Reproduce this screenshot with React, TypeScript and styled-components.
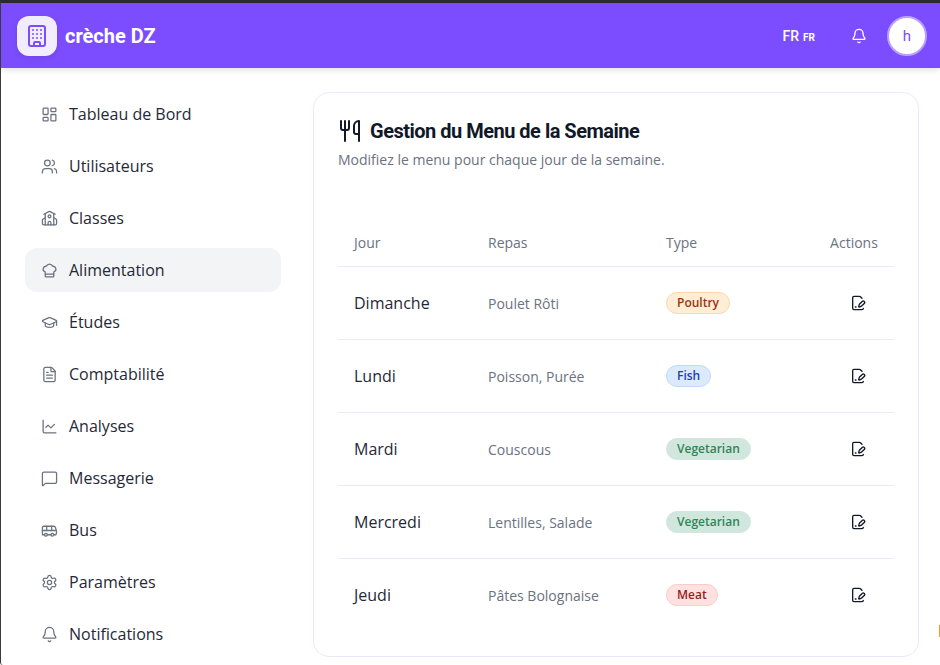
import React from "react";
import styled, { createGlobalStyle } from "styled-components";
import {
  Bell,
  Building,
  Bus,
  ChartLine,
  ChefHat,
  FileText,
  GraduationCap,
  LayoutDashboard,
  MessageSquare,
  School,
  Settings,
  Users,
  Utensils,
} from "lucide-react";

const GlobalStyle = createGlobalStyle`
  html, body {
    margin: 0;
    padding: 0;
    height: 100%;
    overflow: hidden;
    background: #fff;
  }
  body {
    font-family: "Open Sans", "Noto Sans", sans-serif;
  }
`;

const Frame = styled.div`
  width: 940px;
  height: 665px;
  display: flex;
  flex-direction: column;
  box-sizing: border-box;
  border-top: 3px solid #2b2b2b;
  border-left: 1px solid #3a3a3a;
  border-bottom-left-radius: 3px;
  overflow: hidden;
  position: relative;
`;

// the sliver of something orange that peeks in at the window edge
const EdgeSliver = styled.div`
  position: absolute;
  right: 0;
  top: 622px;
  width: 1px;
  height: 12px;
  background: #e3a42c;
`;

const Header = styled.header`
  height: 65px;
  flex: none;
  background: #7c4dff;
  box-shadow: 0 2px 6px rgba(0, 0, 0, 0.12);
  display: flex;
  align-items: center;
  padding: 0 13px 0 16px;
  position: relative;
  z-index: 1;
`;

const LogoBox = styled.div`
  width: 40px;
  height: 40px;
  border-radius: 12px;
  background: #f1edff;
  color: #7c4dff;
  box-shadow: 0 2px 6px rgba(0, 0, 0, 0.1);
  display: flex;
  align-items: center;
  justify-content: center;
  margin-right: 8px;
`;

const Brand = styled.div`
  font-family: Roboto, sans-serif;
  font-weight: 700;
  font-size: 20px;
  color: #fff;
`;

const HeaderRight = styled.div`
  margin-left: auto;
  display: flex;
  align-items: center;
  color: #fff;
`;

const Lang = styled.div`
  font-family: Roboto, sans-serif;
  font-size: 14px;
  font-weight: 500;
  display: flex;
  align-items: baseline;
  gap: 4px;
  margin-right: 36px;
`;

const LangCode = styled.span`
  font-size: 10px;
  font-weight: 700;
`;

const Avatar = styled.div`
  width: 36px;
  height: 36px;
  margin-left: 20px;
  border-radius: 50%;
  background: #fff;
  border: 2px solid #b9a0ff;
  color: #7c4dff;
  font-family: Roboto, sans-serif;
  font-size: 15px;
  display: flex;
  align-items: center;
  justify-content: center;
`;

const Body = styled.div`
  flex: 1;
  min-height: 0;
  display: flex;
`;

const Sidebar = styled.nav`
  width: 280px;
  flex: none;
  box-sizing: border-box;
  padding: 24px 0 0 24px;
  display: flex;
  flex-direction: column;
  gap: 8px;
`;

const NavItem = styled.div<{ $active?: boolean }>`
  height: 44px;
  flex: none;
  box-sizing: border-box;
  padding: 0 16px;
  border-radius: 12px;
  display: flex;
  align-items: center;
  gap: 11px;
  font-size: 16px;
  color: #1f2937;
  background: ${(p) => (p.$active ? "#f3f4f6" : "transparent")};
  svg {
    color: #6b7280;
    flex: none;
  }
`;

const Main = styled.main`
  flex: 1;
  min-width: 0;
  padding: 24px 21px 0 32px;
`;

const Card = styled.section`
  box-sizing: border-box;
  height: 565px;
  border: 1px solid #ebe9fb;
  border-radius: 16px;
  background: #fff;
  padding: 26px 24px 0;
`;

const TitleRow = styled.div`
  display: flex;
  align-items: center;
  gap: 8px;
  color: #111827;
`;

const Title = styled.h2`
  margin: 0;
  font-family: Roboto, sans-serif;
  font-weight: 700;
  font-size: 20px;
  letter-spacing: -0.5px;
`;

const Subtitle = styled.p`
  margin: 7px 0 0;
  font-size: 14px;
  color: #6b7280;
`;

const MenuTable = styled.div`
  margin-top: 49px;
`;

const grid = `
  display: grid;
  grid-template-columns: 134px 178px 1fr 92px;
  align-items: center;
`;

const HeadRow = styled.div`
  ${grid}
  height: 49px;
  box-sizing: border-box;
  font-size: 14px;
  color: #6b7280;
  border-bottom: 1px solid #ebe9fb;
`;

const Row = styled.div`
  ${grid}
  height: 73px;
  box-sizing: border-box;
  border-bottom: 1px solid #ebe9fb;
  &:last-child {
    border-bottom-color: transparent;
  }
`;

const Cell = styled.div`
  padding-left: 16px;
`;

const ActionsHead = styled.div`
  text-align: center;
  padding-left: 12px;
`;

const Day = styled(Cell)`
  font-size: 16px;
  color: #1f2937;
`;

const Meal = styled(Cell)`
  font-size: 14px;
  color: #6b7280;
`;

const TypeCell = styled(Cell)`
  display: flex;
`;

const tones = {
  Poultry: { bg: "#ffedd5", border: "#fed7aa", fg: "#9a3412" },
  Fish: { bg: "#dbeafe", border: "#bfdbfe", fg: "#1e40af" },
  Vegetarian: { bg: "#d1e7dd", border: "#d1e7dd", fg: "#2e8555" },
  Meat: { bg: "#fee2e2", border: "#fecaca", fg: "#991b1b" },
};

type MealType = keyof typeof tones;

const Badge = styled.span<{ $type: MealType }>`
  font-size: 12px;
  font-weight: 600;
  line-height: 20px;
  padding: 0 10px;
  border-radius: 999px;
  background: ${(p) => tones[p.$type].bg};
  border: 1px solid ${(p) => tones[p.$type].border};
  color: ${(p) => tones[p.$type].fg};
`;

const EditButton = styled.div`
  display: flex;
  justify-content: center;
  padding-left: 20px;
  color: #111827;
`;

// file with pencil, the shape without the folded corner line
const EditIcon = () => (
  <svg
    width="16"
    height="16"
    viewBox="0 0 24 24"
    fill="none"
    stroke="currentColor"
    strokeWidth="2"
    strokeLinecap="round"
    strokeLinejoin="round"
  >
    <path d="m18 5-2.414-2.414A2 2 0 0 0 14.172 2H6a2 2 0 0 0-2 2v16a2 2 0 0 0 2 2h12a2 2 0 0 0 2-2" />
    <path d="M21.378 12.626a1 1 0 0 0-3.004-3.004l-4.01 4.012a2 2 0 0 0-.506.854l-.837 2.87a.5.5 0 0 0 .62.62l2.87-.837a2 2 0 0 0 .854-.506z" />
    <path d="M8 18h1" />
  </svg>
);

const navItems = [
  { label: "Tableau de Bord", icon: LayoutDashboard },
  { label: "Utilisateurs", icon: Users },
  { label: "Classes", icon: School },
  { label: "Alimentation", icon: ChefHat, active: true },
  { label: "Études", icon: GraduationCap },
  { label: "Comptabilité", icon: FileText },
  { label: "Analyses", icon: ChartLine },
  { label: "Messagerie", icon: MessageSquare },
  { label: "Bus", icon: Bus },
  { label: "Paramètres", icon: Settings },
  { label: "Notifications", icon: Bell },
];

const meals: { day: string; meal: string; type: MealType }[] = [
  { day: "Dimanche", meal: "Poulet Rôti", type: "Poultry" },
  { day: "Lundi", meal: "Poisson, Purée", type: "Fish" },
  { day: "Mardi", meal: "Couscous", type: "Vegetarian" },
  { day: "Mercredi", meal: "Lentilles, Salade", type: "Vegetarian" },
  { day: "Jeudi", meal: "Pâtes Bolognaise", type: "Meat" },
];

export default function App() {
  return (
    <Frame>
      <GlobalStyle />
      <EdgeSliver />
      <Header>
        <LogoBox>
          <Building size={24} strokeWidth={2} />
        </LogoBox>
        <Brand>crèche DZ</Brand>
        <HeaderRight>
          <Lang>
            FR <LangCode>FR</LangCode>
          </Lang>
          <Bell size={16} />
          <Avatar>h</Avatar>
        </HeaderRight>
      </Header>
      <Body>
        <Sidebar>
          {navItems.map((item) => (
            <NavItem key={item.label} $active={item.active}>
              <item.icon size={17} strokeWidth={1.8} />
              {item.label}
            </NavItem>
          ))}
        </Sidebar>
        <Main>
          <Card>
            <TitleRow>
              <Utensils size={24} />
              <Title>Gestion du Menu de la Semaine</Title>
            </TitleRow>
            <Subtitle>Modifiez le menu pour chaque jour de la semaine.</Subtitle>
            <MenuTable>
              <HeadRow>
                <Cell>Jour</Cell>
                <Cell>Repas</Cell>
                <Cell>Type</Cell>
                <ActionsHead>Actions</ActionsHead>
              </HeadRow>
              {meals.map((m) => (
                <Row key={m.day}>
                  <Day>{m.day}</Day>
                  <Meal>{m.meal}</Meal>
                  <TypeCell>
                    <Badge $type={m.type}>{m.type}</Badge>
                  </TypeCell>
                  <EditButton>
                    <EditIcon />
                  </EditButton>
                </Row>
              ))}
            </MenuTable>
          </Card>
        </Main>
      </Body>
    </Frame>
  );
}
